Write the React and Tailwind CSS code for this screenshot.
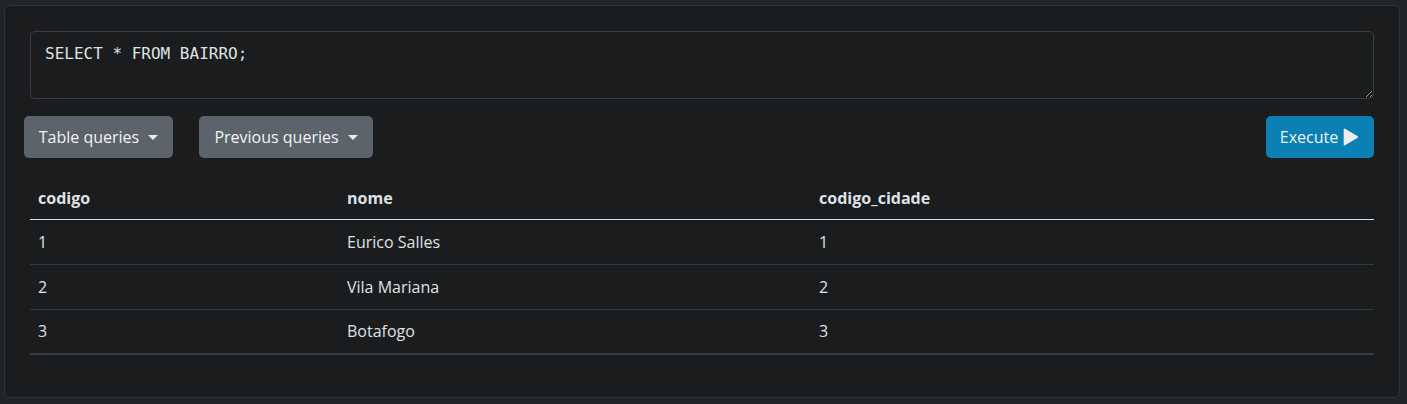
import React from "react";

function Caret() {
  return (
    <span className="ml-[9px] inline-block h-0 w-0 border-x-[5px] border-t-[5px] border-x-transparent border-t-[#e9ecef] align-[3px]" />
  );
}

export default function App() {
  const rows = [
    ["1", "Eurico Salles", "1"],
    ["2", "Vila Mariana", "2"],
    ["3", "Botafogo", "3"],
  ];
  return (
    <div
      className="h-[404px] w-full bg-[#212428] pl-[4px] pt-[5px]"
      style={{ fontFamily: '"Open Sans", "Noto Sans", sans-serif' }}
    >
      <div className="h-[393px] w-[1396px] rounded-[6px] border border-[#2a3541] bg-[#1b1c1e] px-[25px] pt-[25px]">
        <textarea
          readOnly
          defaultValue="SELECT * FROM BAIRRO;"
          className="block h-[68px] w-[1344px] resize-y rounded-[5px] border border-[#3a3d40] bg-[#1b1c1e] px-[14px] pt-[10px] text-[16px] leading-[24px] text-[#dee2e6] outline-none"
          style={{ fontFamily: '"DejaVu Sans Mono", "Liberation Mono", monospace' }}
        />
        <div className="mt-[17px] ml-[-6px] flex w-[1350px] items-center">
          <button className="flex h-[42px] w-[149px] items-center justify-center rounded-[5px] bg-[#5c636a] text-[16px] text-[#f1f3f5]">
            Table queries
            <Caret />
          </button>
          <button className="ml-[26px] flex h-[42px] w-[174px] items-center justify-center rounded-[5px] bg-[#5c636a] text-[16px] text-[#f1f3f5]">
            Previous queries
            <Caret />
          </button>
          <button className="ml-auto flex h-[42px] w-[108px] items-center justify-center gap-[4px] rounded-[5px] bg-[#0a80b4] text-[16px] text-[#f1f3f5]">
            Execute
            <svg width="18" height="20" viewBox="0 0 16 16" fill="#eeeeee">
              <path d="M1.5 1.2v13.6c0 .6.7 1 1.2.6L14 8.6c.4-.3.4-.9 0-1.2L2.7.6C2.2.3 1.5.6 1.5 1.2z" />
            </svg>
          </button>
        </div>
        <table className="mt-[20px] w-[1344px] table-fixed border-collapse text-[16px] text-[#dee2e6]">
          <colgroup>
            <col className="w-[309px]" />
            <col className="w-[472px]" />
            <col className="w-[563px]" />
          </colgroup>
          <thead>
            <tr className="h-[41px] border-b border-[#dee2e6]">
              <th className="px-[8px] text-left font-bold">codigo</th>
              <th className="px-[8px] text-left font-bold">nome</th>
              <th className="px-[8px] text-left font-bold">codigo_cidade</th>
            </tr>
          </thead>
          <tbody>
            {rows.map((r, i) => (
              <tr
                key={i}
                className={
                  i === rows.length - 1
                    ? "h-[45px] border-b-2 border-[#373c3e]"
                    : "h-[45px] border-b border-[#35383b]"
                }
              >
                {r.map((c, j) => (
                  <td key={j} className="px-[8px] text-left">
                    {c}
                  </td>
                ))}
              </tr>
            ))}
          </tbody>
        </table>
      </div>
    </div>
  );
}
